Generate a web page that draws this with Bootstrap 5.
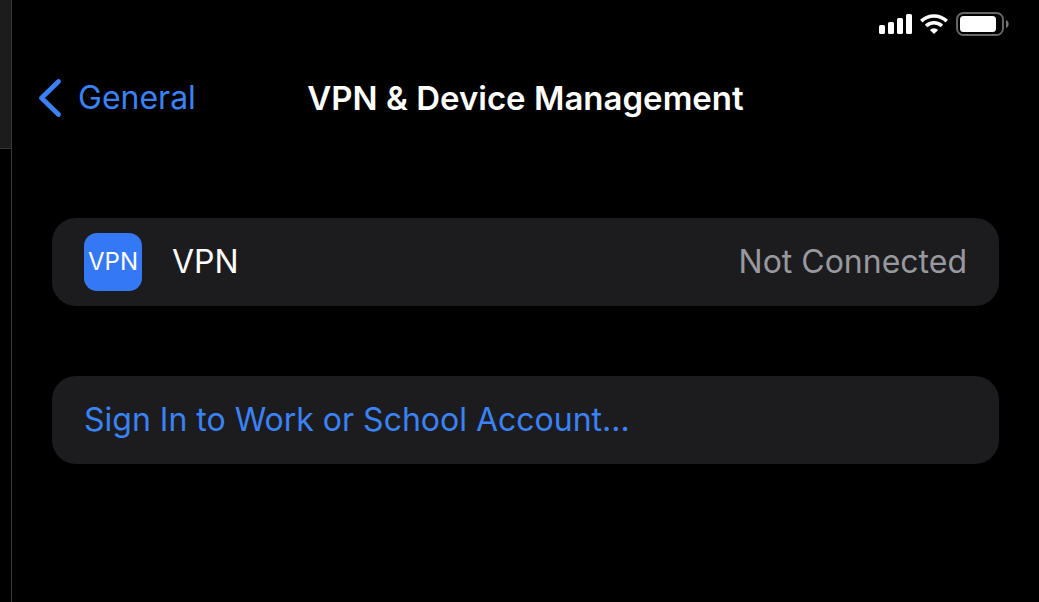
<!DOCTYPE html>
<html lang="en" data-bs-theme="dark">
<head>
<meta charset="utf-8">
<meta name="viewport" content="width=device-width, initial-scale=1">
<title>VPN &amp; Device Management</title>
<link href="https://cdn.jsdelivr.net/npm/bootstrap@5.3.0/dist/css/bootstrap.min.css" rel="stylesheet">
<style>
  body { background: #000; color: #fff; font-family: Inter, "Liberation Sans", sans-serif; font-size: 32px; line-height: 40px; }
  svg { display: block; }
  .side-pane { width: 12px; border-right: 1px solid #38383a; }
  .side-top { height: 149px; background: #1c1c1d; border-bottom: 1px solid #38383a; }
  .status-bar { height: 48px; padding-right: 30px; gap: 8px; }
  .title-bar { height: 100px; padding: 0 26px; }
  .title-text { font-size: 33px; line-height: 40px; font-weight: 600; }
  .accent, .accent:hover { color: #3a82f7; }
  .back-link { gap: 16px; }
  .settings { padding: 70px 40px; gap: 70px; }
  .settings-group { --bs-list-group-border-radius: 24px; --bs-list-group-border-width: 0; --bs-list-group-bg: #1c1c1e; --bs-list-group-color: #fff; }
  .settings-row { height: 88px; padding: 0 32px; }
  .vpn-tile { width: 58px; height: 58px; border-radius: 13px; background: #3478f6; font-size: 24px; line-height: 32px; margin-right: 30px; }
  .muted-value { color: #98989f; }
</style>
</head>
<body>
<div class="d-flex min-vh-100">
  <aside class="side-pane flex-shrink-0"><div class="side-top"></div></aside>
  <div class="flex-fill">
    <div class="status-bar d-flex align-items-center justify-content-end">
      <svg width="33" height="20" viewBox="0 0 33 20" fill="#fff" role="img" aria-label="Cellular signal"><rect y="11" width="6" height="9" rx="1.5"/><rect x="9" y="8" width="6" height="12" rx="1.5"/><rect x="18" y="4" width="6" height="16" rx="1.5"/><rect x="27" width="6" height="20" rx="1.5"/></svg>
      <svg width="28" height="20" viewBox="0 0 28 20" fill="none" stroke="#fff" stroke-width="3.6" role="img" aria-label="Wi-Fi"><path d="M1.3 7.1a18.2 18.2 0 0 1 25.4 0M6.1 12a11.4 11.4 0 0 1 15.8 0"/><path d="M14 20l-4.1-4.1a5.8 5.8 0 0 1 8.2 0z" fill="#fff" stroke="none"/></svg>
      <svg width="53" height="24" viewBox="0 0 53 24" role="img" aria-label="Battery"><rect x="1" y="1" width="46" height="22" rx="6.5" fill="none" stroke="#666" stroke-width="2"/><rect x="4" y="4" width="36" height="16" rx="3.5" fill="#fff"/><path d="M50 8c3.6 1.4 3.6 6.6 0 8z" fill="#777"/></svg>
    </div>
    <header class="title-bar row g-0 align-items-center">
      <div class="col d-flex">
        <a href="#" class="back-link accent d-flex align-items-center text-decoration-none">
          <svg width="24" height="40" viewBox="0 0 24 40" fill="none" stroke="currentColor" stroke-width="4.8" stroke-linecap="round" stroke-linejoin="round" aria-hidden="true"><path d="M20.5 3.5L3.5 20l17 16.500"/></svg>
          <span>General</span>
        </a>
      </div>
      <h1 class="title-text col-auto m-0">VPN &amp; Device Management</h1>
      <div class="col"></div>
    </header>
    <main class="settings d-flex flex-column">
      <div class="settings-group list-group">
        <a href="#" class="settings-row list-group-item list-group-item-action d-flex align-items-center">
          <span class="vpn-tile d-flex align-items-center justify-content-center text-white">VPN</span>
          <span>VPN</span>
          <span class="muted-value ms-auto">Not Connected</span>
        </a>
      </div>
      <div class="settings-group list-group">
        <button type="button" class="settings-row accent list-group-item list-group-item-action">Sign In to Work or School Account...</button>
      </div>
    </main>
  </div>
</div>
<script src="https://cdn.jsdelivr.net/npm/bootstrap@5.3.0/dist/js/bootstrap.bundle.min.js"></script>
</body>
</html>
